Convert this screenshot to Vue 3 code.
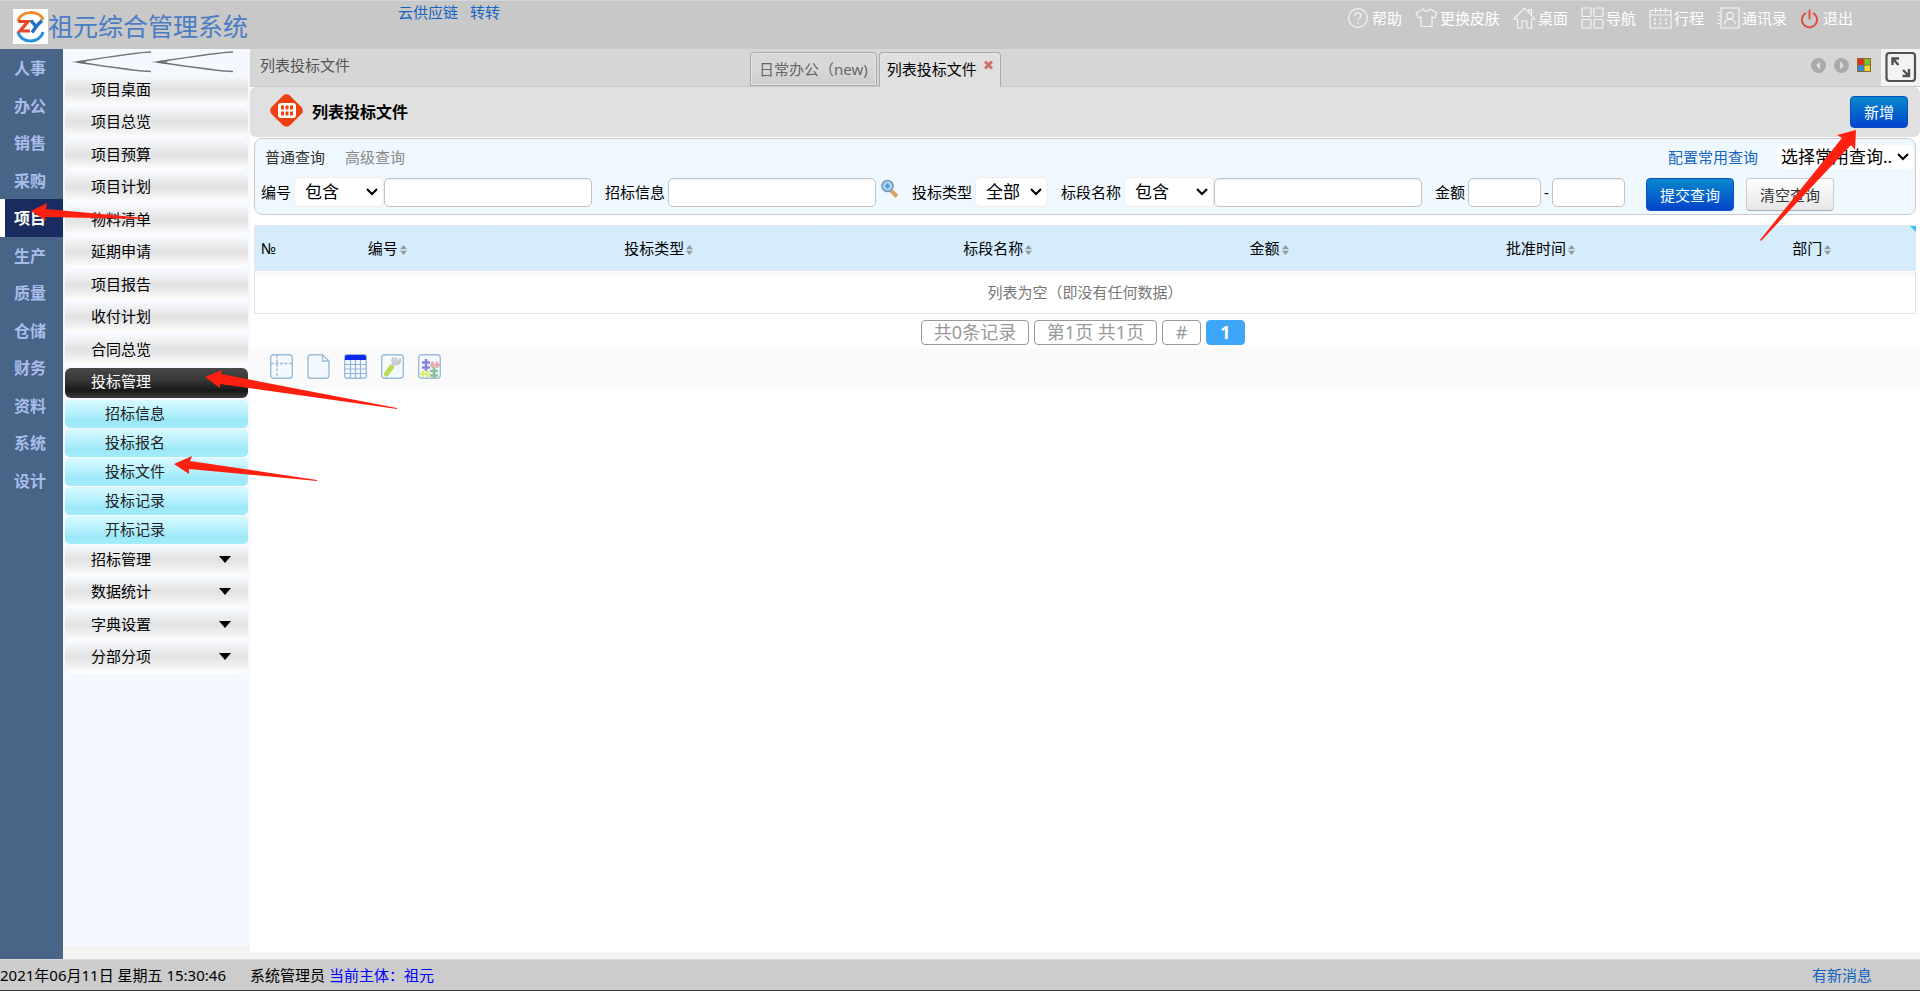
<script setup>
import { ref } from 'vue'

const modules = ['人事', '办公', '销售', '采购', '项目', '生产', '质量', '仓储', '财务', '资料', '系统', '设计']
const activeModule = ref('项目')

const menu = [
  { label: '项目桌面' },
  { label: '项目总览' },
  { label: '项目预算' },
  { label: '项目计划' },
  { label: '物料清单' },
  { label: '延期申请' },
  { label: '项目报告' },
  { label: '收付计划' },
  { label: '合同总览' },
  { label: '投标管理', open: true, children: ['招标信息', '投标报名', '投标文件', '投标记录', '开标记录'] },
  { label: '招标管理', group: true },
  { label: '数据统计', group: true },
  { label: '字典设置', group: true },
  { label: '分部分项', group: true },
]

const columns = [
  { label: '编号', size: 'narrow' },
  { label: '投标类型', size: 'wide' },
  { label: '标段名称', size: 'wide' },
  { label: '金额', size: 'narrow' },
  { label: '批准时间', size: 'wide' },
  { label: '部门', size: 'narrow' },
]
</script>

<template>
  <div class="page">
    <header class="top">
      <div class="brand">
        <svg class="logo" viewBox="0 0 35 35" aria-hidden="true">
          <rect width="35" height="35" fill="#fff" />
          <path d="M5 12C8 1 27 1 30 11" fill="none" stroke="#ee8a2c" stroke-width="3" />
          <path d="M5 23C8 35 27 35 30 23" fill="none" stroke="#2592dc" stroke-width="3" />
          <path d="M5 12.500H15L7 22H17" fill="none" stroke="#e8452c" stroke-width="3.200" />
          <path d="M18 11.500L23 17.500L29 11.500M24 16.500L19 23.500" fill="none" stroke="#1f6fc4" stroke-width="3.400" />
        </svg>
        <h1>祖元综合管理系统</h1>
      </div>
      <nav class="quick">
        <a href="#">云供应链</a>
        <a href="#">转转</a>
      </nav>
      <nav class="tools">
        <a href="#" class="roomy">
          <svg width="20" height="22" viewBox="0 0 20 22"><circle cx="10" cy="11" r="9.300" /><path d="M7 9C7 5 13 5 13 8.500C13 11 10 10.800 10 13.500M10 15V16.500" /></svg>
          帮助
        </a>
        <a href="#">
          <svg width="23" height="22" viewBox="0 0 23 22"><path d="M8 2L1 6L3.500 11L6 10V19.500H17V10L19.500 11L22 6L15 2C13.500 5 9.500 5 8 2Z" /></svg>
          更换皮肤
        </a>
        <a href="#">
          <svg width="23" height="22" viewBox="0 0 23 22"><path d="M1 12L11.500 1L22 12H18.500V21H14V14H9V21H4.500V12ZM16 5V2.500H18.500V8" /></svg>
          桌面
        </a>
        <a href="#">
          <svg width="23" height="22" viewBox="0 0 23 22"><rect x="1" y="1" width="9" height="8.500" rx="1" /><rect x="13" y="1" width="9" height="8.500" rx="1" /><rect x="1" y="12.500" width="9" height="8.500" rx="1" /><rect x="13" y="12.500" width="9" height="8.500" rx="1" /></svg>
          导航
        </a>
        <a href="#">
          <svg width="23" height="22" viewBox="0 0 23 22"><path d="M1 3.500H22V21H1ZM1 8H22M6.500 0.500V6M11.500 0.500V6M16.500 0.500V6" /><path d="M5 12.500H18.500M5 16.500H18.500" stroke-width="2" stroke-dasharray="2 3.500" /></svg>
          行程
        </a>
        <a href="#">
          <svg width="23" height="22" viewBox="0 0 23 22"><path d="M4 1H22V21H4ZM0.500 5.500H3M0.500 9H3M0.500 13H3M0.500 16.500H3" /><circle cx="13" cy="8.500" r="3.200" /><path d="M7.500 17.500C8 10.500 18 10.500 18.500 17.500" /></svg>
          通讯录
        </a>
        <a href="#" class="roomy">
          <svg class="power" width="19" height="22" viewBox="0 0 19 22"><path d="M6 6A7.600 7.600 0 1 0 13 6M9.500 2.500V12.500" /></svg>
          退出
        </a>
      </nav>
    </header>

    <div class="body">
      <nav class="rail">
        <button
          v-for="name in modules"
          :key="name"
          type="button"
          :class="{ active: name === activeModule }"
          @click="activeModule = name"
        >{{ name }}</button>
      </nav>

      <aside class="side">
        <button type="button" class="collapse" aria-label="收起菜单">
          <svg width="187" height="26" viewBox="0 0 187 26">
            <g fill="none" stroke="#777" stroke-width="1.500">
              <path d="M88 3Q76 3 14 13Q76 22.500 88 22.500" />
              <path d="M170 3Q158 3 94 13Q158 22.500 170 22.500" />
            </g>
            <path d="M8 13L26 10.500L22 13L26 15.500ZM88 13L108 10.500L103 13L108 15.500Z" fill="#666" opacity=".7" />
          </svg>
        </button>
        <ul class="menu">
          <li v-for="item in menu" :key="item.label" :class="{ open: item.open }">
            <button type="button" class="entry">
              {{ item.label }}
              <span v-if="item.group || item.open" class="caret"></span>
            </button>
            <ul v-if="item.children" class="sub">
              <li v-for="child in item.children" :key="child"><a href="#">{{ child }}</a></li>
            </ul>
          </li>
        </ul>
      </aside>

      <div class="work">
        <div class="strip">
          <div class="strip-main">
            <span class="crumb">列表投标文件</span>
            <div class="tabs">
              <button type="button" class="tab">日常办公（new)</button>
              <button type="button" class="tab current">
                列表投标文件
                <svg width="9" height="10" viewBox="0 0 9 10"><path d="M1 1.500L8 8.500M8 1.500L1 8.500" stroke="#d07068" stroke-width="3" /></svg>
              </button>
            </div>
            <div class="pager-icons">
              <button type="button" aria-label="向左">
                <svg width="15" height="15" viewBox="0 0 15 15"><circle cx="7.500" cy="7.500" r="7.500" fill="#aaa" /><path d="M9 3.500L5 7.500L9 11.500Z" fill="#ddd" /></svg>
              </button>
              <button type="button" aria-label="向右">
                <svg width="15" height="15" viewBox="0 0 15 15"><circle cx="7.500" cy="7.500" r="7.500" fill="#aaa" /><path d="M6 3.500L10 7.500L6 11.500Z" fill="#ddd" /></svg>
              </button>
              <button type="button" aria-label="窗口">
                <svg width="14" height="14" viewBox="0 0 14 14"><rect width="14" height="14" fill="#8a6a28" /><rect x="1" y="1" width="5.500" height="5.500" fill="#e8281c" /><rect x="7.500" y="1" width="5.500" height="5.500" fill="#7cc42c" /><rect x="1" y="7.500" width="5.500" height="5.500" fill="#2c8cec" /><rect x="7.500" y="7.500" width="5.500" height="5.500" fill="#f4d83c" /></svg>
              </button>
            </div>
          </div>
          <button type="button" class="full" aria-label="全屏">
            <svg width="32" height="32" viewBox="0 0 32 32">
              <rect x="1.500" y="2" width="28.500" height="28" rx="3" fill="#f3f3f3" stroke="#505050" stroke-width="2.200" />
              <g fill="none" stroke="#505050" stroke-width="2.400"><path d="M7.500 14V7.500H14M8 8L13.500 14" /><path d="M24 18V25H17.500M23.500 24.500L18 19" /></g>
            </svg>
          </button>
        </div>

        <section class="heading">
          <svg width="35" height="35" viewBox="0 0 35 35" aria-hidden="true">
            <rect x="4.500" y="4.500" width="26" height="26" rx="5" fill="#f04010" transform="rotate(45 17.500 17.500)" />
            <rect x="9" y="10" width="18" height="15" rx="3" fill="#fff" />
            <g fill="#f04010"><rect x="12" y="12.500" width="3" height="4" /><rect x="16.500" y="12.500" width="3" height="4" /><rect x="21" y="12.500" width="3" height="4" /><rect x="12" y="18.500" width="3" height="4" /><rect x="16.500" y="18.500" width="3" height="4" /><rect x="21" y="18.500" width="3" height="4" /></g>
          </svg>
          <h2>列表投标文件</h2>
          <button type="button" class="btn primary add">新增</button>
        </section>

        <form class="query" @submit.prevent>
          <div class="query-top">
            <button type="button" class="mode on">普通查询</button>
            <button type="button" class="mode">高级查询</button>
            <a href="#" class="config">配置常用查询</a>
            <select class="saved" aria-label="常用查询"><option>选择常用查询..</option></select>
          </div>
          <div class="query-row">
            <div class="field">
              <label for="no">编号</label>
              <select class="match" aria-label="编号匹配方式"><option>包含</option></select>
              <input id="no" type="text">
            </div>
            <div class="field">
              <label for="info">招标信息</label>
              <input id="info" type="text">
              <button type="button" class="lookup" aria-label="查找">
                <svg width="18" height="19" viewBox="0 0 18 19"><path d="M9.500 11L16 17.500" stroke="#d8a868" stroke-width="4" /><circle cx="6.500" cy="7" r="5.500" fill="#a8d4f4" stroke="#7898b8" stroke-width="1.600" /><path d="M6.500 4L9 7L6.500 10L4 7Z" fill="#4898e0" /></svg>
              </button>
            </div>
            <div class="field">
              <label for="type">投标类型</label>
              <select id="type" class="type"><option>全部</option></select>
            </div>
            <div class="field">
              <label for="section">标段名称</label>
              <select class="match" aria-label="标段名称匹配方式"><option>包含</option></select>
              <input id="section" type="text">
            </div>
            <div class="field">
              <label for="min">金额</label>
              <input id="min" class="short" type="text">
              <span class="dash">-</span>
              <input class="short" type="text" aria-label="金额上限">
            </div>
            <div class="actions">
              <button type="submit" class="btn primary">提交查询</button>
              <button type="reset" class="btn plain">清空查询</button>
            </div>
          </div>
        </form>

        <div class="grid">
          <table>
            <thead>
              <tr>
                <th class="index">№</th>
                <th v-for="col in columns" :key="col.label" :class="col.size">
                  {{ col.label }}<svg class="sort" width="7" height="10" viewBox="0 0 7 10"><path d="M3.500 0L7 4.200H0ZM3.500 10L7 5.800H0Z" fill="#999" /></svg>
                </th>
              </tr>
            </thead>
            <tbody>
              <tr><td colspan="7">列表为空（即没有任何数据）</td></tr>
            </tbody>
          </table>
          <span class="corner"></span>
        </div>

        <div class="paging">
          <span class="cell total">共0条记录</span>
          <span class="cell pages">第1页 共1页</span>
          <button type="button" class="cell">#</button>
          <button type="button" class="cell now">1</button>
        </div>

        <div class="toolbar">
          <button type="button" aria-label="冻结">
            <svg width="23" height="25" viewBox="0 0 23 25"><rect class="frame" x=".7" y=".7" width="21.600" height="23.600" rx="3" /><path d="M1 9.500H22M7 1V24" stroke="#9cbcd8" stroke-width="1.400" stroke-dasharray="3 1.500" /></svg>
          </button>
          <button type="button" aria-label="新页">
            <svg width="23" height="25" viewBox="0 0 23 25"><path class="frame" d="M4 .7H15.500L22 7V21.500Q22 24.300 19 24.300H4Q1 24.300 1 21.500V3.700Q1 .7 4 .7ZM15.500 .7V7H22" /></svg>
          </button>
          <button type="button" aria-label="表格">
            <svg width="23" height="25" viewBox="0 0 23 25"><rect class="frame" x=".7" y=".7" width="21.600" height="23.600" rx="2" /><path d="M1 10.500H22M1 15H22M1 19.500H22M6.500 6V24M11.500 6V24M16.500 6V24" stroke="#90b4d8" stroke-width="1.200" /><path d="M1 6V3Q1 1 3 1H20Q22 1 22 3V6Z" fill="#0a28f0" /></svg>
          </button>
          <button type="button" aria-label="设置">
            <svg width="23" height="25" viewBox="0 0 23 25"><rect class="frame" x=".7" y=".7" width="21.600" height="23.600" rx="3" /><path d="M5.500 20L10.500 13" stroke="#b8dc50" stroke-width="5" stroke-linecap="round" /><path d="M11 12L14.500 8.500M13 3.500C9 7 13 12.500 18 9.500C19.500 8 19.500 7 19 5.500L16.500 8L14 6.500L15.500 3.500" stroke="#c4c8cc" stroke-width="2" fill="none" /></svg>
          </button>
          <button type="button" aria-label="插件">
            <svg width="23" height="25" viewBox="0 0 23 25"><rect class="frame" x=".7" y=".7" width="21.600" height="23.600" rx="3" /><g fill="none" stroke-width="2.600"><path d="M8 5V17M4 8.500H12M4 13.500H12" stroke="#8484dc" /><path d="M12 11H22M14.500 7.500V14M19 7.500V14" stroke="#eca8a8" /><path d="M2 20H12M5 16.500V23M9.500 16.500V23" stroke="#d8f070" /><path d="M16 13V24M12 17H20M12 21.500H20" stroke="#88c098" /></g></svg>
          </button>
        </div>
      </div>
    </div>

    <footer class="status">
      <span class="clock">2021年06月11日 星期五 15:30:46</span>
      <span>系统管理员 <a href="#" class="owner">当前主体：祖元</a></span>
      <a href="#" class="news">有新消息</a>
    </footer>

    <svg class="marks left" width="420" height="500" viewBox="0 0 420 500" aria-hidden="true">
      <path d="M31 211L47 203L46 209L145 218L143 219L45 217L46 221Z" />
      <path d="M205 377L222 370L221 374L397 408V409L220 384V388Z" />
      <path d="M174 464L192 456L190 461L317 480V481L189 469V474Z" />
    </svg>
    <svg class="marks right" width="180" height="260" viewBox="0 0 180 260" aria-hidden="true">
      <path d="M116 130L97 135L102 138L20 240L21 241L111 145L115 150Z" />
    </svg>
  </div>
</template>

<style>
body { margin: 0; }
</style>

<style scoped>
.page {
  position: relative;
  display: flex;
  flex-direction: column;
  box-sizing: border-box;
  min-height: 100vh;
  border-bottom: 1px solid #333;
  background: #f3f3f3;
  color: #000;
  font-family: "Noto Sans", "Noto Sans CJK SC", sans-serif;
  font-size: 15px;
  line-height: 20px;
}
.page * { box-sizing: border-box; }
a { color: #1565c0; text-decoration: none; }
button, input, select { margin: 0; font: inherit; color: inherit; }
button { padding: 0; border: 0; background: none; cursor: pointer; }
svg { display: block; flex: none; }
ul { margin: 0; padding: 0; list-style: none; }

.top {
  display: flex;
  align-items: flex-start;
  height: 49px;
  border-top: 1px solid #d4d4dc;
  background: #c8c8c8;
}
.brand { display: flex; align-items: center; width: 398px; padding: 8px 0 0 13px; }
.logo { width: 35px; height: 35px; }
.brand h1 { margin: 0; color: #4a7cc4; font-size: 25px; font-weight: 400; line-height: 35px; }
.quick { display: flex; gap: 12px; padding-top: 1px; }
.tools { display: flex; gap: 13px; margin-left: auto; padding: 6px 67px 0 0; }
.tools a { display: flex; align-items: center; gap: 2px; color: #fff; line-height: 22px; }
.tools .roomy { gap: 4px; }
.tools svg { fill: none; stroke: #f4f4f4; stroke-width: 1.200; }
.tools .power { stroke: #e04838; stroke-width: 1.800; }

.body { display: flex; flex: 1; }
.rail { display: flex; flex-direction: column; flex: none; width: 63px; background: #486486; }
.rail button { height: 38px; padding-right: 3px; color: #a8bcec; font-size: 16px; font-weight: 700; }
.rail button:nth-child(even) { height: 37px; }
.rail .active {
  padding-right: 8px;
  border-left: 5px solid #fff;
  background: #182c60;
  color: #fff;
}

.side { flex: none; width: 187px; margin-bottom: 13px; background: #f5f9ff; }
.collapse { display: block; width: 100%; height: 26px; }
.menu { padding: 0 2px; }
.menu > li { padding: 1px 0; }
.menu > li:nth-child(even) { padding-bottom: 2px; }
.entry {
  display: flex;
  align-items: center;
  justify-content: space-between;
  width: 100%;
  height: 30px;
  padding: 0 17px 5px 26px;
  border-radius: 6px;
  background: linear-gradient(#f5f7fa, #e2e2e2 45%, #e8e8e8 60%, #fff);
}
.caret { margin-top: 2px; border: 6px solid transparent; border-top: 7px solid #000; border-bottom: 0; }
.open .entry { background: linear-gradient(#484848, #383838 40%, #181818 75%, #3c3c3c); color: #fff; }
.open .caret { border-top-color: #e08a20; }
.menu > .open { padding-bottom: 0; }
.menu > .open + li { padding-top: 0; }
.sub { display: grid; gap: 1px; padding-top: 2px; }
.sub a {
  display: block;
  height: 28px;
  padding-left: 40px;
  border-radius: 5px;
  background: linear-gradient(#d8faff, #bcf2fe 40%, #9ce8f8 75%, #a4ecfa);
  color: #222;
  line-height: 26px;
}

.work { flex: 1; min-width: 0; margin-bottom: 7px; background: #fff; }
.strip { display: flex; height: 38px; border-bottom: 1px solid #c8c8c8; background: #f3f3f3; }
.strip-main {
  display: grid;
  grid-template-columns: 500px auto 1fr;
  flex: 1;
  background: #d6d6d6;
}
.crumb { padding: 6px 10px; color: #555; }
.tabs { display: flex; gap: 2px; padding: 3px 0 0 0; }
.tab {
  display: flex;
  gap: 7px;
  height: 34px;
  padding: 0 8px 1px;
  align-items: center;
  border: 1px solid #aaa;
  border-radius: 4px 4px 0 0;
  background: linear-gradient(#d8d8d8 50%, #ccc);
  box-shadow: inset 0 0 0 1px #e4e4e4;
  color: #666;
}
.tab.current { height: 35px; padding: 0 7px 2px; border-bottom: 0; background: #e0e0e0; color: #000; }
.tab.current svg { margin-bottom: 8px; }
.pager-icons { display: flex; gap: 8px; justify-content: flex-end; align-items: center; padding: 0 10px 6px 0; }
.full { display: flex; justify-content: center; width: 39px; padding-top: 2px; }

.heading {
  display: flex;
  align-items: center;
  height: 50px;
  padding: 0 12px 0 19px;
  border-radius: 6px;
  background: #e0e0e0;
}
.heading > svg { margin-bottom: 4px; }
.heading h2 { margin: 0; padding-left: 8px; font-size: 16px; font-weight: 600; }
.btn {
  width: 88px;
  height: 33px;
  border: 1px solid #0a50c0;
  border-radius: 4px;
  background: linear-gradient(#0888cc, #0444cc);
  color: #fff;
}
.btn.add { width: 58px; height: 32px; margin-left: auto; }
.btn.plain { border-color: #ccc; border-bottom-color: #aaa; background: linear-gradient(#fff, #e6e6e6); color: #333; }

.query {
  margin: 1px 4px 0;
  padding: 8px 2px 3px 6px;
  border: 1px solid #c8ccd0;
  border-radius: 8px;
  background: #f0f8ff;
}
.query-top { display: flex; align-items: center; height: 20px; padding-left: 4px; }
.mode { color: #888; }
.mode.on { margin-right: 20px; color: #333; }
.config { margin-left: auto; }
select {
  appearance: none;
  padding: 0 10px;
  border: 1px solid #eee;
  border-radius: 5px;
  background: #fff url("data:image/svg+xml,%3Csvg xmlns='http://www.w3.org/2000/svg' width='12' height='8'%3E%3Cpath d='M1 1L6 6L11 1' fill='none' stroke='black' stroke-width='2'/%3E%3C/svg%3E") no-repeat right 5px center;
  font-size: 17px;
}
.saved { width: 136px; height: 24px; margin-left: 19px; padding: 0 4px; border: 0; background-position: right 4px center; }
.query-row { display: flex; flex-wrap: wrap; gap: 13px; padding-top: 10px; }
.field { display: flex; align-items: center; height: 30px; }
.field label { padding-right: 3px; }
.field input { width: 208px; height: 29px; padding: 0 6px; border: 1px solid #c4c4c4; border-radius: 5px; background: #fff; box-shadow: inset 0 1px 1px #eee; }
.field select { height: 30px; }
.field .match { width: 90px; }
.field .type { width: 73px; }
.field .short { width: 73px; }
.dash { padding: 0 3px; }
.lookup { height: 32px; margin-left: 5px; }
.lookup svg { margin-bottom: 8px; }
.actions { display: flex; gap: 12px; height: 34px; padding: 1px 0 0 8px; }

.grid { position: relative; margin: 10px 4px 0; }
.corner { position: absolute; top: 1px; right: 0; border: 3px solid #38c4f4; border-left-color: transparent; border-bottom-color: transparent; }
table { width: 100%; table-layout: fixed; border-collapse: collapse; }
th { height: 45px; padding: 0; border: 1px solid #e4e8ec; background: #d5ecfd; font-weight: 400; }
.index { width: 31px; padding-left: 6px; text-align: left; }
.narrow { width: 12.250%; }
.wide { width: 20.420%; }
.sort { display: inline-block; margin: 0 4px 0 2px; vertical-align: -1px; }
td { height: 43px; padding: 0; border: 1px solid #e4e4e4; background: linear-gradient(#f6f6f6, #fff 8px); color: #777; text-align: center; }

.paging { display: flex; justify-content: center; gap: 5px; padding: 6px 4px 3px 0; }
.cell {
  min-width: 39px;
  height: 25px;
  border: 1px solid #999;
  border-radius: 4px;
  color: #999;
  font-size: 18px;
  line-height: 23px;
  text-align: center;
}
.total { width: 108px; }
.pages { width: 123px; }
.now { border-color: #3ea6f7; background: #3ea6f7; color: #fff; font-weight: 700; }
.toolbar { display: flex; gap: 14px; padding: 6px 20px 9px; background: #fafafa; }
.frame { fill: #f4f9ff; stroke: #9cbcd8; stroke-width: 1.400; }

.status {
  display: flex;
  align-items: center;
  height: 31px;
  border-top: 1px solid #d8d8d8;
  background: #ccc;
}
.clock { width: 250px; }
.owner { color: #00f; }
.news { margin-left: auto; padding-right: 48px; }

.marks { position: absolute; top: 0; fill: #ff2010; pointer-events: none; }
.marks.left { left: 0; }
.marks.right { right: 0; }
</style>
